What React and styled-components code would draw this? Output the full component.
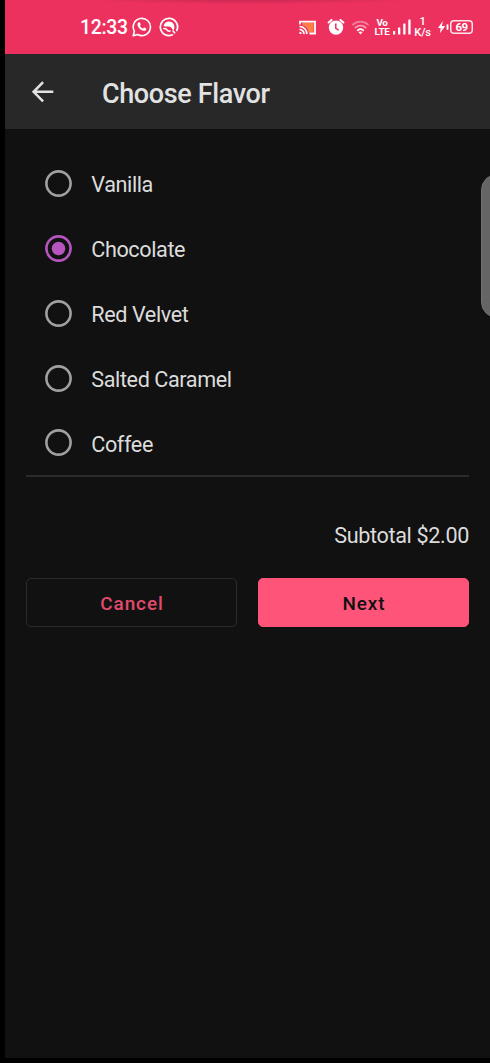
import React, { useState } from 'react'
import styled, { createGlobalStyle } from 'styled-components';

const GlobalStyle = createGlobalStyle`
    * {
        box-sizing: border-box;
    }
    body {
        margin: 0;
        background: #000;
        font-family: Roboto, sans-serif;
    }
`
const Root = styled.div`
    position: relative;
    display: flex;
    flex-direction: column;
    height: 1063px;
    padding: 0 0 5px 5px;
    overflow: hidden;
    background: #000;
`
const StatusBar = styled.div`
    display: flex;
    align-items: center;
    justify-content: space-between;
    height: 54px;
    padding: 0 17px 0 75px;
    background: radial-gradient(ellipse 165px 4px at 245px 0, #d32b55 30%, rgba(211, 43, 85, 0) 100%), #ec315f;
    color: #fff;
`
const StatusGroup = styled.div`
    display: flex;
    align-items: center;
    height: 54px;
`
const Clock = styled.span`
    width: 52px;
    font-size: 19.4px;
    font-weight: 500;
    letter-spacing: -0.3px;
    line-height: 54px;
    padding-top: 2px;
`
const Icon = styled.svg`
    display: block;
    flex: none;
    margin-left: ${props => props.$gap || 0}px;
`
const Stack = styled.div`
    display: flex;
    flex-direction: column;
    align-items: center;
    width: ${props => props.$width}px;
    margin-left: ${props => props.$gap}px;
    font-size: ${props => props.$size}px;
    font-weight: ${props => props.$weight};
    line-height: ${props => props.$line}px;
    letter-spacing: -0.3px;
    white-space: nowrap;
`
const Battery = styled.div`
    display: flex;
    align-items: center;
    justify-content: center;
    width: 23px;
    height: 14px;
    margin-left: 1.5px;
    border-radius: 4px;
    box-shadow: inset 0 0 0 1.5px #ffe3ea;
    font-size: 11.5px;
    font-weight: 700;
    letter-spacing: -0.5px;
    line-height: 14px;
`
const AppBar = styled.div`
    display: flex;
    align-items: center;
    height: 75px;
    padding: 0 27px 0 21px;
    background: #282828;
`
const BackButton = styled.button`
    width: 33px;
    height: 33px;
    padding: 0;
    border: none;
    background: none;
    color: #e2e2e2;
`
const Title = styled.h1`
    margin: 5px 0 0 43px;
    font-size: 27px;
    font-weight: 500;
    letter-spacing: -0.38px;
    line-height: 36px;
    color: #e2e2e2;
    white-space: nowrap;
`
const Content = styled.div`
    flex: 1;
    padding: 22.3px 21px 0 21px;
    background: #111;
`
const Option = styled.label`
    display: flex;
    align-items: center;
    height: 64.8px;
    padding-left: 19px;
    font-size: 21.6px;
    letter-spacing: -0.4px;
    color: #dcdcdc;
`
const HiddenInput = styled.input`
    position: absolute;
    opacity: 0;
    pointer-events: none;
`
const Radio = styled.svg`
    display: block;
    width: 27px;
    height: 27px;
    margin-right: 19.3px;
    color: ${props => props.$checked ? '#b655c0' : '#a0a0a0'};
`
const OptionLabel = styled.span`
    padding-top: 3.6px;
    line-height: 26px;
`
const Divider = styled.div`
    height: 1.4px;
    background: #2b2b2b;
`
const Subtotal = styled.p`
    margin: 46.5px 0 29px;
    font-size: 21.6px;
    letter-spacing: -0.35px;
    line-height: 26px;
    text-align: right;
    color: #dcdcdc;
`
const Actions = styled.div`
    display: grid;
    grid-template-columns: 1fr 1fr;
    gap: 21px;
`
const Button = styled.button`
    height: 49px;
    padding: 2px 0 0 1px;
    border: 1px solid ${props => props.$primary ? '#ff5479' : '#2b2b2b'};
    border-radius: 5px;
    background: ${props => props.$primary ? '#ff5479' : 'transparent'};
    color: ${props => props.$primary ? '#111' : '#e24a6c'};
    font-family: inherit;
    font-size: 18.9px;
    font-weight: 500;
    letter-spacing: 0.95px;
`
// エッジパネルのハンドル
const EdgeHandle = styled.div`
    position: absolute;
    top: 174px;
    right: -24px;
    width: 33px;
    height: 144px;
    border: 1px solid #707070;
    border-radius: 16px;
    background: #656565;
`

const flavors = ['Vanilla', 'Chocolate', 'Red Velvet', 'Salted Caramel', 'Coffee'];

const WhatsAppIcon = () => (
    <Icon width="20" height="20" viewBox="0 0 20 20" fill="none" stroke="#fff" strokeWidth="1.6">
        <path d="M1.2 18.8l1.2-4.5a8.6 8.6 0 1 1 3.3 3.2z" strokeLinejoin="round" />
        <path d="M6.8 5.3l1.1.1.9 2.1-.9 1.2c.7 1.4 1.7 2.3 3.1 2.9l1.1-1.1 2.2 1c.1 1.4-.8 2.3-2.2 2.4-3.4-.2-6.3-3.1-6.6-6.3 0-1 .5-1.9 1.3-2.3z" fill="#fff" stroke="none" />
    </Icon>
)

const AppIcon = () => (
    <Icon $gap={7} width="20" height="20" viewBox="0 0 20 20" fill="none" stroke="#fff" strokeLinecap="round">
        <path d="M13.4 17.8A8.6 8.6 0 1 1 17.8 13.4" strokeWidth="1.7" />
        <path d="M4.6 8.4C6 4.2 11.7 3 14.6 7c1.3 2 1 4.6-.2 6.8-.9-2.6-2.6-4.3-5-4.4-1.6 0-3.4.6-4.8-1z" fill="#fff" stroke="none" />
        <path d="M4.8 11.6c1.8-.5 2.6.4 3.2 1.4.7 1.1 1.9 1.3 3.1 1" strokeWidth="1.5" />
        <path d="M14 14l1.6 1.8" strokeWidth="1.6" />
    </Icon>
)

const CastIcon = () => (
    <Icon width="17" height="15" viewBox="0 0 17 15" fill="none" stroke="#fff">
        <path d="M3.5 2.6H14.6v10H9.7C9.2 8.7 7 6 3.5 5.4z" fill="#ff7f45" stroke="none" />
        <path d="M1 4.4V1.6h15v11.9h-5.5" strokeWidth="1.8" />
        <path d="M.5 6.5a7.4 7.4 0 0 1 7.4 7.6M.5 9.4a4.5 4.5 0 0 1 4.5 4.7" strokeWidth="1.7" />
        <path d="M.5 11.8a2.3 2.3 0 0 1 2.3 2.3H.5z" fill="#fff" stroke="none" />
    </Icon>
)

const AlarmIcon = () => (
    <Icon $gap={10.5} width="18" height="18" viewBox="0 0 18 18" fill="none">
        <path d="M1.6 4.5l3-2.6M16.4 4.5l-3-2.6" stroke="#fff" strokeWidth="2" strokeLinecap="round" />
        <circle cx="9" cy="9.6" r="7.2" fill="#fff" />
        <path d="M8.8 5.5v4.8l3 1.9" stroke="#ec315f" strokeWidth="1.5" />
    </Icon>
)

const WifiIcon = () => (
    <Icon $gap={7} width="17" height="15" viewBox="0 0 17 15" fill="none" strokeWidth="1.7" strokeLinecap="round">
        <path d="M1 4.7C5.2.6 11.8.6 16 4.7" stroke="#f5809d" />
        <path d="M3.4 7.7c3-2.7 7.2-2.7 10.2 0" stroke="#f9a3b8" />
        <path d="M5.7 10.3c1.6-1.3 4-1.3 5.6 0" stroke="#fff" />
        <path d="M6.4 12.1c1.3-.8 2.9-.8 4.2 0l-2.1 2.3z" fill="#fff" />
    </Icon>
)

const SignalIcon = () => (
    <Icon $gap={4} width="18" height="16" viewBox="0 0 18 16" fill="#fff">
        <rect x="0" y="12" width="2.2" height="3.5" rx=".6" />
        <rect x="5" y="8.5" width="2.3" height="7" rx=".6" />
        <rect x="10.2" y="4.5" width="2.3" height="11" rx=".6" />
        <rect x="15.3" y="0.5" width="2.3" height="15" rx=".6" />
    </Icon>
)

const ChargeIcon = () => (
    <Icon $gap={7} width="11" height="14" viewBox="0 0 11 14" fill="#fff">
        <path d="M4.8 1L0 8h2.7L1.9 13.2 7.2 6H3.9z" />
        <rect x="8.6" y="4.2" width="1.8" height="5.6" rx=".6" />
    </Icon>
)

const App = () => {
    const [selected, setSelected] = useState('Chocolate');

    return (
        <Root>
            <GlobalStyle />
            <StatusBar>
                <StatusGroup>
                    <Clock>12:33</Clock>
                    <WhatsAppIcon />
                    <AppIcon />
                </StatusGroup>
                <StatusGroup>
                    <CastIcon />
                    <AlarmIcon />
                    <WifiIcon />
                    <Stack $gap={6.5} $width={14} $size={9.9} $weight={700} $line={9}>
                        <span>Vo</span>
                        <span>LTE</span>
                    </Stack>
                    <SignalIcon />
                    <Stack $gap={3.5} $width={16} $size={11.2} $weight={500} $line={11}>
                        <span>1</span>
                        <span>K/s</span>
                    </Stack>
                    <ChargeIcon />
                    <Battery>69</Battery>
                </StatusGroup>
            </StatusBar>
            <AppBar>
                <BackButton aria-label="Back">
                    <svg width="33" height="33" viewBox="0 0 33 33" fill="none" stroke="currentColor" strokeWidth="2.5">
                        <path d="M27.3 16.8H7.7M17.1 7.2L7.6 16.8l9.5 9.6" />
                    </svg>
                </BackButton>
                <Title>Choose Flavor</Title>
            </AppBar>
            <Content>
                {flavors.map(flavor => (
                    <Option key={flavor}>
                        <HiddenInput
                            type="radio"
                            name="flavor"
                            checked={selected === flavor}
                            onChange={() => setSelected(flavor)}
                        />
                        <Radio viewBox="0 0 27 27" $checked={selected === flavor}>
                            <circle cx="13.5" cy="13.5" r="12.1" fill="none" stroke="currentColor" strokeWidth="2.6" />
                            {selected === flavor && <circle cx="13.5" cy="13.5" r="6.8" fill="currentColor" />}
                        </Radio>
                        <OptionLabel>{flavor}</OptionLabel>
                    </Option>
                ))}
                <Divider />
                <Subtotal>Subtotal $2.00</Subtotal>
                <Actions>
                    <Button>Cancel</Button>
                    <Button $primary>Next</Button>
                </Actions>
            </Content>
            <EdgeHandle />
        </Root>
    )
}

export default App
